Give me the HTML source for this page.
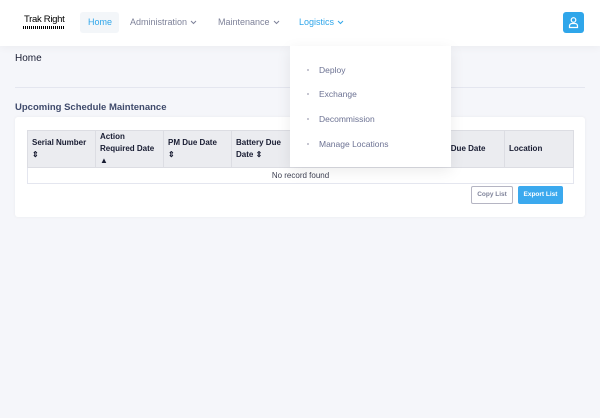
<!DOCTYPE html>
<html><head><style>
*{margin:0;padding:0;box-sizing:border-box}
body{width:600px;height:418px;background:#f5f6fa;font-family:"Liberation Sans",sans-serif;position:relative;overflow:hidden;color:#3f4254}
.top{position:absolute;left:0;top:0;width:600px;height:46px;background:#fff;box-shadow:0 2px 8px rgba(0,0,0,0.04)}
.nav{position:absolute;top:17px;font-size:9px;color:#7e8299;line-height:11px}
.nav svg{vertical-align:middle;margin-left:3px}
.abs{position:absolute}
th{background:#ebecf0;font-size:8px;font-weight:bold;text-align:left;padding:0 4px;border:1px solid #dcdde3;color:#181c32;vertical-align:middle;line-height:12px}
td{font-size:8px;text-align:center;border:1px solid #e4e6ef;height:16px}
.dd{font-size:8.5px;color:#6c7293;position:absolute;left:319px}
.dot{position:absolute;left:307px;width:2px;height:2px;background:#b5b5c3;border-radius:1px}
</style></head><body>
<div class="top"></div>
<div class="abs" style="left:24px;top:14px;font-size:9.5px;color:#000;letter-spacing:-0.3px">Trak Right</div>
<div class="abs" style="left:23px;top:26px;width:42px;height:3px;background:repeating-linear-gradient(90deg,#000 0 1px,#fff 1px 2px)"></div>
<div class="abs" style="left:80px;top:12px;width:39px;height:21px;background:#f3f6f9;border-radius:3px"></div>
<div class="nav" style="left:88px;color:#2fa6ea">Home</div>
<div class="nav" style="left:130px">Administration<svg width="7" height="5" viewBox="0 0 7 5"><path d="M1 1l2.5 2.5L6 1" fill="none" stroke="#7e8299" stroke-width="1"/></svg></div>
<div class="nav" style="left:218px">Maintenance<svg width="7" height="5" viewBox="0 0 7 5"><path d="M1 1l2.5 2.5L6 1" fill="none" stroke="#7e8299" stroke-width="1"/></svg></div>
<div class="nav" style="left:299px;color:#2fa6ea">Logistics<svg width="7" height="5" viewBox="0 0 7 5"><path d="M1 1l2.5 2.5L6 1" fill="none" stroke="#2fa6ea" stroke-width="1"/></svg></div>
<div class="abs" style="left:563px;top:12px;width:21px;height:21px;background:#2fa6ea;border-radius:3px">
<svg width="21" height="21" viewBox="0 0 21 21"><circle cx="10.5" cy="8" r="2.3" fill="none" stroke="#fff" stroke-width="1.2"/><path d="M6.5 15.5v-1.5a2.5 2.5 0 0 1 2.5-2.5h3a2.5 2.5 0 0 1 2.5 2.5v1.5z" fill="none" stroke="#fff" stroke-width="1.2"/></svg></div>
<div class="abs" style="left:15px;top:53px;font-size:10px;color:#181c32">Home</div>
<div class="abs" style="left:15px;top:87px;width:570px;height:1px;background:#e4e6ef"></div>
<div class="abs" style="left:15px;top:102px;font-size:9.5px;font-weight:bold;color:#3f4a6b">Upcoming Schedule Maintenance</div>
<div class="abs" style="left:15px;top:117px;width:570px;height:100px;background:#fff;border-radius:3px;box-shadow:0 0 3px rgba(0,0,0,0.05)"></div>
<table class="abs" style="left:27px;top:130px;width:547px;border-collapse:collapse">
<tr style="height:35px"><th style="width:68px">Serial Number<br>&#8661;</th><th style="width:68px">Action<br>Required Date<br>&#9650;</th><th style="width:68px">PM Due Date<br>&#8661;</th><th style="width:60px">Battery Due<br>Date &#8661;</th><th></th><th style="width:80px">Filter Due Date</th><th style="width:69px">Location</th></tr>
<tr><td colspan="7">No record found</td></tr>
</table>
<div class="abs" style="left:471px;top:186px;width:42px;height:18px;border:1px solid #b5b5c3;border-radius:2px;font-size:6.5px;font-weight:bold;color:#7e8299;text-align:center;line-height:16px">Copy List</div>
<div class="abs" style="left:518px;top:186px;width:45px;height:18px;background:#3ba9ee;border-radius:2px;font-size:6.5px;font-weight:bold;color:#fff;text-align:center;line-height:18px">Export List</div>
<div class="abs" style="left:290px;top:46px;width:161px;height:121px;background:#fff;box-shadow:0 4px 14px rgba(0,0,0,0.08)"></div>
<div class="dot" style="top:69px"></div><div class="dd" style="top:65px">Deploy</div>
<div class="dot" style="top:93px"></div><div class="dd" style="top:89px">Exchange</div>
<div class="dot" style="top:118px"></div><div class="dd" style="top:114px">Decommission</div>
<div class="dot" style="top:143px"></div><div class="dd" style="top:139px">Manage Locations</div>
</body></html>
